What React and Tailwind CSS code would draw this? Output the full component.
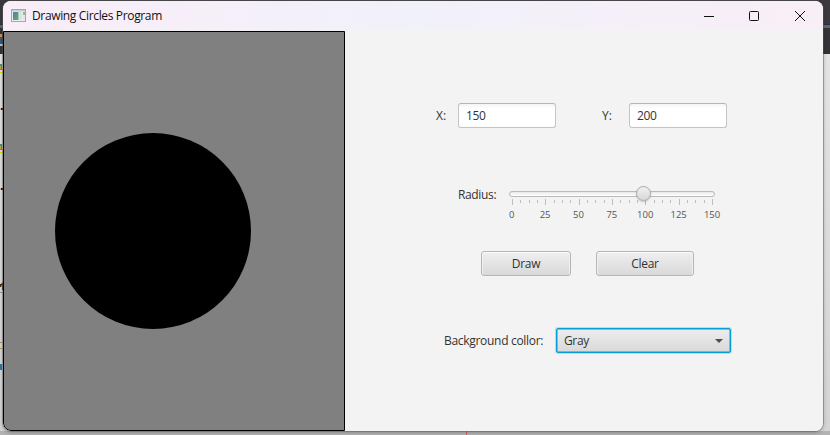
import React from 'react';

const ticks = Array.from({ length: 25 }, (_, i) => i);
const labels = [0, 25, 50, 75, 100, 125, 150];

function TitleBar() {
  return (
    <header className="flex h-[29px] items-center bg-linear-to-r from-[#f9edf7] via-[#f1f1fa] to-[#f8eef6] pl-2">
      <svg width="16" height="14" viewBox="0 0 16 14" className="mr-[5px] shrink-0">
        <rect x="0.5" y="0.5" width="14" height="12" fill="#eceeee" stroke="#aaa4ac" />
        <rect x="1" y="1" width="13" height="1.4" fill="#c9c9cf" />
        <defs>
          <linearGradient id="pane" x1="0" y1="0" x2="1" y2="1">
            <stop offset="0" stopColor="#4a82a8" />
            <stop offset="1" stopColor="#62ac72" />
          </linearGradient>
        </defs>
        <rect x="2" y="3" width="5.5" height="8" fill="url(#pane)" />
        <rect x="8" y="3" width="3" height="8" fill="#dde1e1" />
        <rect x="12" y="3" width="2" height="3" fill="#8dbd9a" />
        <rect x="12" y="6" width="2" height="5" fill="#e0e4e2" />
      </svg>
      <h1 className="h-4 flex-1 whitespace-nowrap text-[12px] leading-4 tracking-[-0.35px] text-[#111]">Drawing Circles Program</h1>
      <svg width="120" height="20" viewBox="0 0 120 20" fill="none" stroke="#111" className="shrink-0">
        <path d="M1 10.5h10" />
        <rect x="46.5" y="5.5" width="9" height="9" rx="1" />
        <path d="M92 5l10 10M102 5l-10 10" />
      </svg>
    </header>
  );
}

function Field({ label, value, labelClass }) {
  return (
    <label className="flex items-center">
      <span className={labelClass}>{label}</span>
      <span className="flex h-[25px] w-[98px] items-center rounded-[3px] border border-[#c4c4c4] border-t-[#b5b5b5] bg-white bg-linear-to-b from-[#f4f4f4] to-white to-20% pl-[7px] tracking-[-0.4px]">{value}</span>
    </label>
  );
}

function RadiusSlider() {
  return (
    <div className="w-[214px]">
      <div className="relative ml-[3px] h-[6px] w-[206px] rounded-full border border-[#bababa] bg-linear-to-b from-[#e9e9e9] to-white">
        <div className="absolute -top-[6px] left-[126px] h-[15px] w-[15px] rounded-full border border-[#a8a8a8] bg-linear-to-b from-[#f0f0f0] to-[#d8d8d8] shadow-[0_1px_2px_rgba(0,0,0,0.18)]" />
      </div>
      <svg width="214" height="12" viewBox="0 0 214 12" className="block" stroke="#bdbdbd">
        {ticks.map((i) => {
          const x = Math.round(6 + (i * 200) / 24) + 0.5;
          return <path key={i} d={i % 4 === 0 ? `M${x} 2v6` : `M${x} 3v3`} />;
        })}
      </svg>
      <div className="-ml-[11px] flex w-[234px]">
        {labels.map((n) => (
          <span key={n} className="w-[33.4px] shrink-0 text-center text-[9.5px] leading-3 text-[#555]">{n}</span>
        ))}
      </div>
    </div>
  );
}

const buttonStyle =
  'h-[25px] rounded-[3px] border border-[#b5b5b5] bg-linear-to-b from-[#efefef] to-[#d9d9d9] tracking-[-0.3px] shadow-[inset_0_1px_0_#fafafa,inset_1px_0_0_#f0f0f0,inset_-1px_0_0_#f0f0f0]';

function Controls() {
  return (
    <section className="flex flex-1 flex-col whitespace-nowrap bg-[#f3f3f3] pt-[72px] text-[12px] leading-4 text-[#333]">
      <div className="flex h-[25px]">
        <Field label="X:" value="150" labelClass="ml-[91px] w-[22px]" />
        <Field label="Y:" value="200" labelClass="ml-[46px] w-[27px]" />
      </div>
      <div className="mt-[59px] flex h-[34px] pl-[113px]">
        <span className="w-[48px] tracking-[-0.35px]">Radius:</span>
        <div className="pt-1">
          <RadiusSlider />
        </div>
      </div>
      <div className="mt-[30px] flex gap-[25px] pl-[136px]">
        <button className={buttonStyle + ' w-[90px]'}>Draw</button>
        <button className={buttonStyle + ' w-[98px]'}>Clear</button>
      </div>
      <div className="mt-[52px] flex items-center pl-[99px]">
        <span className="w-[112px] tracking-[-0.3px]">Background collor:</span>
        <div className="flex h-[25px] w-[175px] items-center justify-between rounded-[2px] border border-[#039ed3] bg-linear-to-b from-[#ededed] to-[#d9d9d9] pl-[7px] pr-[7px] shadow-[0_0_0_1px_rgba(3,158,211,0.25),inset_0_0_0_0.5px_#039ed3]">
          <span className="tracking-[-0.35px]">Gray</span>
          <svg width="8" height="4" viewBox="0 0 8 4">
            <path d="M0 0h8L4 4z" fill="#4d4d4d" />
          </svg>
        </div>
      </div>
    </section>
  );
}

function Backdrop() {
  return (
    <div className="absolute inset-0 -z-10 flex flex-col bg-[#d0d0d0]">
      <div className="h-6 bg-[#3b393d]" />
      <div className="h-px bg-[#20334a]" />
      <div className="h-[3px] bg-[#66666b]" />
      <div className="h-[26px] bg-[#343337]" />
      <div className="flex-1 bg-linear-to-b from-[#e4e4e4] to-[#d4d4d4]" />
      <div className="flex h-1 bg-[#b2b2b2] pl-[466px]">
        <div className="w-px bg-[#cf6464]" />
      </div>
      <svg width="3" height="435" viewBox="0 0 3 435" className="absolute left-0 top-0">
        <path d="M0 34h2v3H0z" fill="#d89537" />
        <path d="M0 37h2v7H0z" fill="#315d80" />
        <path d="M0 44h3v2H0z" fill="#b9c6d1" />
        <path d="M0 64h2v6H0zM0 144h2v6H0z" fill="#2fa477" />
        <path d="M0 66h1v3H0zM0 146h1v3H0z" fill="#d7a83b" />
        <path d="M0 72h3v1H0zM0 152h3v1H0z" fill="#e4df00" />
        <path d="M1 108h2v2H1zM1 188h2v2H1z" fill="#251c38" />
        <path d="M0 108h1v2H0zM0 188h1v2H0z" fill="#e5af80" />
        <path d="M0 284h1l2-2v8H2v-5l-1 2H0z" fill="#49311d" />
        <path d="M0 292h3v1H0z" fill="#999" />
        <path d="M0 342h2v1H0zM0 348h2v1H0z" fill="#c29142" />
        <path d="M0 364h2v6H0z" fill="#2c78ac" />
      </svg>
    </div>
  );
}

export default function App() {
  return (
    <div className="relative isolate h-[435px] w-[830px] overflow-hidden pl-[3px] pt-px font-['Open_Sans','Noto_Sans',sans-serif]">
      <Backdrop />
      <main className="flex h-[430px] w-[820px] flex-col overflow-hidden rounded-[8px] bg-[#f3f3f3] shadow-[0_0_0_1px_rgba(90,90,90,0.45),0_1px_4px_rgba(0,0,0,0.3)]">
        <TitleBar />
        <div className="flex flex-1 pt-px">
          <section className="flex w-[342px] items-center rounded-bl-[8px] border border-black bg-[#808080] pl-[51px]">
            <svg width="196" height="196" viewBox="0 0 196 196">
              <circle cx="98" cy="98" r="98" fill="black" />
            </svg>
          </section>
          <Controls />
        </div>
      </main>
    </div>
  );
}
